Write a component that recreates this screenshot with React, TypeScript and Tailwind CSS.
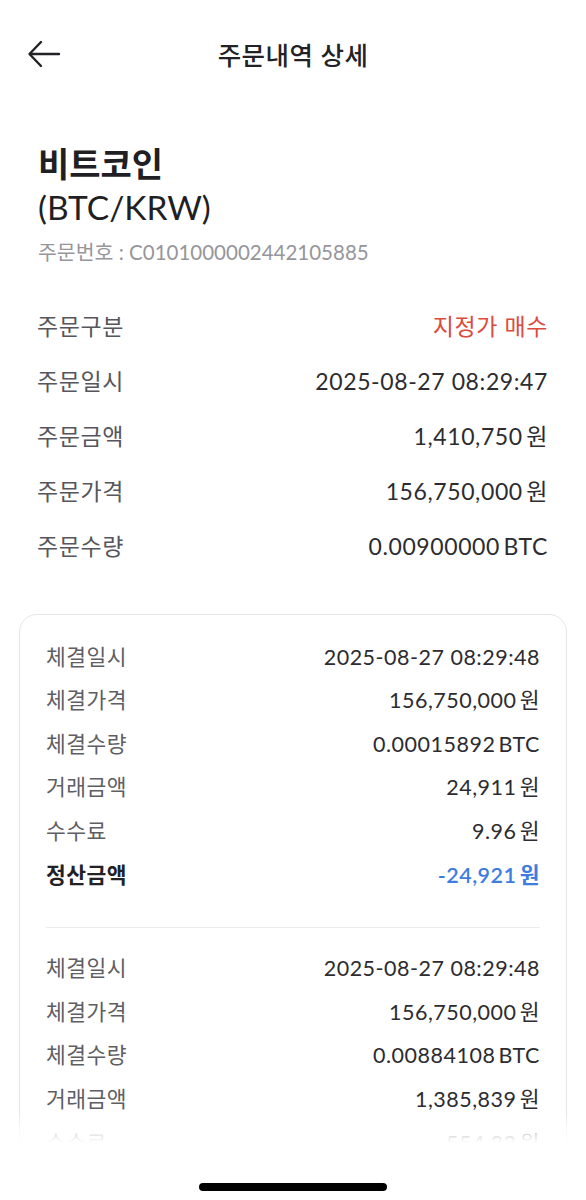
import React from 'react';

const FONT = { fontFamily: "Lato, 'Noto Sans CJK KR', 'Noto Sans', sans-serif" };

type Row = { label: string; value: string; strong?: boolean; tone?: 'red' | 'blue' };

const orderRows: Row[] = [
  { label: '주문구분', value: '지정가 매수', tone: 'red' },
  { label: '주문일시', value: '2025-08-27 08:29:47' },
  { label: '주문금액', value: '1,410,750\u2009원' },
  { label: '주문가격', value: '156,750,000\u2009원' },
  { label: '주문수량', value: '0.00900000\u2009BTC' },
];

const fills: Row[][] = [
  [
    { label: '체결일시', value: '2025-08-27 08:29:48' },
    { label: '체결가격', value: '156,750,000\u2009원' },
    { label: '체결수량', value: '0.00015892\u2009BTC' },
    { label: '거래금액', value: '24,911\u2009원' },
    { label: '수수료', value: '9.96\u2009원' },
    { label: '정산금액', value: '-24,921\u2009원', strong: true, tone: 'blue' },
  ],
  [
    { label: '체결일시', value: '2025-08-27 08:29:48' },
    { label: '체결가격', value: '156,750,000\u2009원' },
    { label: '체결수량', value: '0.00884108\u2009BTC' },
    { label: '거래금액', value: '1,385,839\u2009원' },
    { label: '수수료', value: '554.33\u2009원' },
    { label: '정산금액', value: '-1,386,393\u2009원', strong: true, tone: 'blue' },
  ],
];

function valueColor(r: Row) {
  if (r.tone === 'red') return 'text-[#dc4a3d]';
  if (r.tone === 'blue') return 'text-[#3d7de0]';
  return 'text-[#2c2c31]';
}

export default function App() {
  return (
    <div className="w-[586px] h-[1200px] bg-white flex flex-col overflow-hidden" style={FONT}>
      {/* Header */}
      <div className="h-[110px] shrink-0 relative flex items-start justify-center pt-[37px]">
        <button className="absolute left-[26px] top-[38px] w-9 h-8 flex items-center justify-center">
          <svg width="34" height="28" viewBox="0 0 34 28" fill="none" stroke="#222226" strokeWidth="2.4" strokeLinecap="round" strokeLinejoin="round">
            <path d="M32 14H3" />
            <path d="M14 2L2.5 14L14 26" />
          </svg>
        </button>
        <h1 className="text-[25.5px] leading-[36px] font-medium text-[#222226] tracking-[0.5px]">주문내역 상세</h1>
      </div>

      {/* Scrolling content */}
      <div className="flex-1 relative overflow-hidden">
        <div className="px-[38px] pt-[32px]">
          <div className="text-[34px] leading-[43px] font-bold text-[#1f1f24]">비트코인</div>
          <div className="text-[33.5px] leading-[44px] text-[#1f1f24]">(BTC/KRW)</div>
          <div className="mt-[10px] text-[20.5px] leading-[27px] text-[#96969b]">주문번호 : C0101000002442105885</div>
        </div>

        <div className="pl-[37px] pr-[38px] pt-[33px]">
          {orderRows.map((r) => (
            <div key={r.label} className="h-[55px] flex items-center justify-between text-[23px] tracking-[0.6px]">
              <span className="text-[#56565c]">{r.label}</span>
              <span className={valueColor(r)}>{r.value}</span>
            </div>
          ))}
        </div>

        <div className="mx-[19px] mt-[40px] border border-[#e6e6e9] rounded-[18px] px-[26px]">
          {fills.map((group, gi) => (
            <div key={gi} className={gi > 0 ? 'border-t border-[#ececee] pt-[19px] pb-[28px]' : 'pt-[20px] pb-[30px]'}>
              {group.map((r) => (
                <div key={r.label} className="h-[43.6px] flex items-center justify-between text-[21.5px] tracking-[0.5px]">
                  <span className={r.strong ? 'text-[#222226] font-semibold' : 'text-[#5e5e64]'}>{r.label}</span>
                  <span className={`${valueColor(r)} ${r.strong ? 'font-semibold' : ''}`}>{r.value}</span>
                </div>
              ))}
            </div>
          ))}
        </div>

        <div className="absolute left-0 right-0 bottom-0 h-[30px] bg-gradient-to-b from-white/0 via-white/70 to-white" />
      </div>

      {/* Home indicator */}
      <div className="h-[57px] shrink-0 flex items-start justify-center pt-[40px]">
        <div className="w-[188px] h-[8px] rounded-full bg-black" />
      </div>
    </div>
  );
}
